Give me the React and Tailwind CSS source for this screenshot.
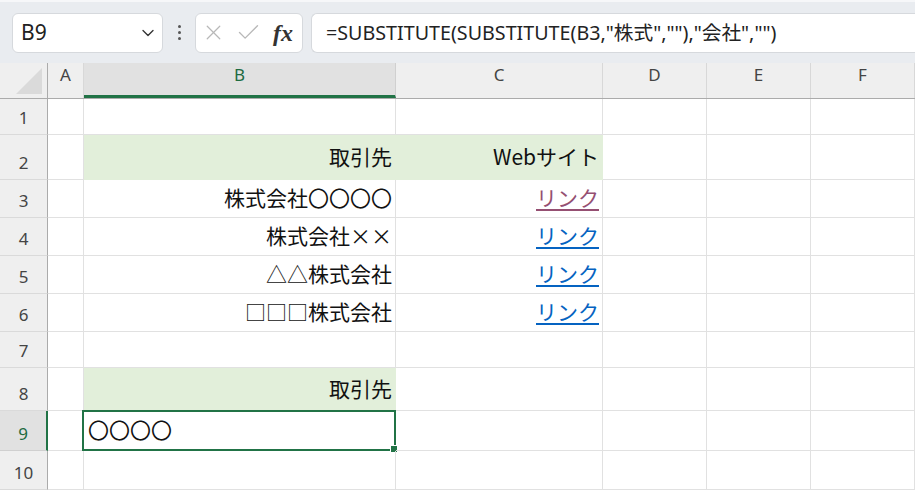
import { ChevronDown, X, Check } from 'lucide-react';

const cols = [
  { key: 'A', w: 'w-[36px]' },
  { key: 'B', w: 'w-[312px]' },
  { key: 'C', w: 'w-[207px]' },
  { key: 'D', w: 'w-[104px]' },
  { key: 'E', w: 'w-[104px]' },
  { key: 'F', w: 'w-[104px]' },
];

const rows = [
  { n: 1, h: 'h-[36px]', cells: {} },
  { n: 2, h: 'h-[45px]', cells: { B: { text: '取引先', fill: true }, C: { text: 'Webサイト', fill: true } } },
  { n: 3, h: 'h-[38px]', cells: { B: { text: '株式会社〇〇〇〇' }, C: { link: 'visited' } } },
  { n: 4, h: 'h-[38px]', cells: { B: { text: '株式会社××' }, C: { link: 'new' } } },
  { n: 5, h: 'h-[38px]', cells: { B: { text: '△△株式会社' }, C: { link: 'new' } } },
  { n: 6, h: 'h-[38px]', cells: { B: { text: '□□□株式会社' }, C: { link: 'new' } } },
  { n: 7, h: 'h-[36px]', cells: {} },
  { n: 8, h: 'h-[43px]', cells: { B: { text: '取引先', fill: true } } },
  { n: 9, h: 'h-[40px]', cells: { B: { text: '〇〇〇〇', left: true, active: true } } },
  { n: 10, h: 'h-[39px]', cells: {} },
];

const cellFont = { fontFamily: '"Noto Sans CJK JP", "Noto Sans", sans-serif' };

function Cell({ col, data }) {
  const base = `${col.w} shrink-0 border-r border-b relative flex items-center`;
  if (!data) return <div className={`${base} border-[#e1e1e1]`} />;
  const fill = data.fill ? 'bg-[#e2efda] border-[#e2efda]' : 'border-[#e1e1e1]';
  return (
    <div className={`${base} ${fill} ${data.left ? 'justify-start pl-[4px]' : 'justify-end pr-[3px]'} pb-[3px]`}>
      {data.text && (
        <span className="text-[21px] leading-[26px] text-[#111]" style={cellFont}>
          {data.text}
        </span>
      )}
      {data.link && (
        <span
          className={`text-[21px] leading-[26px] underline underline-offset-[3px] decoration-[1.5px] ${
            data.link === 'visited' ? 'text-[#954f72]' : 'text-[#0563c1]'
          }`}
          style={cellFont}
        >
          リンク
        </span>
      )}
      {data.active && (
        <div className="absolute -left-[2px] -top-[1px] -right-[1px] -bottom-[1px] border-2 border-[#217346] pointer-events-none">
          <div className="absolute -right-[4px] -bottom-[4px] w-[8px] h-[8px] bg-[#217346] border border-white" />
        </div>
      )}
    </div>
  );
}

export default function App() {
  return (
    <div className="w-[915px] h-[490px] overflow-hidden bg-white" style={{ fontFamily: '"Noto Sans", sans-serif' }}>
      {/* formula bar */}
      <div className="h-[63px] bg-[#e9ecf0] border-t-2 border-[#f6f7f9] flex items-center pl-[12px] gap-[8px]">
        <div className="w-[151px] h-[40px] bg-white rounded-[6px] border border-[#d6d9dd] flex items-center justify-between pl-[8px] pr-[4px]">
          <span className="text-[21px] text-[#222]">B9</span>
          <ChevronDown className="w-[20px] h-[20px] text-[#333]" strokeWidth={1.6} />
        </div>
        <div className="w-[16px] flex flex-col items-center gap-[3px]">
          <span className="w-[3px] h-[3px] rounded-full bg-[#555]" />
          <span className="w-[3px] h-[3px] rounded-full bg-[#555]" />
          <span className="w-[3px] h-[3px] rounded-full bg-[#555]" />
        </div>
        <div className="w-[108px] h-[40px] bg-white rounded-[6px] border border-[#d6d9dd] flex items-center pl-[5px] gap-[9px]">
          <X className="w-[25px] h-[25px] text-[#b8b8b8]" strokeWidth={1.2} />
          <Check className="w-[27px] h-[27px] text-[#b8b8b8]" strokeWidth={1.2} />
          <span
            className="text-[24px] italic font-bold text-[#333] leading-none ml-[2px]"
            style={{ fontFamily: '"Liberation Serif", serif' }}
          >
            fx
          </span>
        </div>
        <div className="flex-1 h-[40px] bg-white rounded-l-[6px] border border-r-0 border-[#d6d9dd] flex items-center pl-[14px]">
          <span className="text-[19.7px] text-[#222] whitespace-nowrap" style={{ fontFamily: '"Noto Sans", "Noto Sans CJK JP", sans-serif' }}>
            =SUBSTITUTE(SUBSTITUTE(B3,"株式",""),"会社","")
          </span>
        </div>
      </div>

      {/* column headers */}
      <div className="flex h-[36px] bg-[#efefef] border-b border-[#ababab]">
        <div className="w-[48px] shrink-0 border-r border-[#ababab] flex items-end justify-end pr-[4px] pb-[3px]">
          <svg width="28" height="28" viewBox="0 0 28 28">
            <polygon points="27,1 27,27 1,27" fill="#dadada" />
          </svg>
        </div>
        {cols.map((c) => (
          <div
            key={c.key}
            className={`${c.w} shrink-0 border-r flex items-start justify-center pt-[2px] text-[17px] leading-[20px] ${
              c.key === 'B'
                ? 'bg-[#e1e1e1] border-[#d0d0d0] text-[#1e6b41] border-b-[3px] border-b-[#217346]'
                : 'border-[#d8d8d8] text-[#444]'
            }`}
          >
            {c.key}
          </div>
        ))}
      </div>

      {/* rows */}
      {rows.map((r) => (
        <div key={r.n} className={`flex ${r.h}`}>
          <div
            className={`w-[48px] shrink-0 border-b flex items-end justify-center pb-[6px] text-[17px] leading-[20px] ${
              r.n === 9
                ? 'bg-[#e1e1e1] border-r-2 border-r-[#217346] border-b-[#d0d0d0] text-[#1e6b41]'
                : 'bg-[#efefef] border-r border-r-[#ababab] border-b-[#dadada] text-[#444]'
            }`}
          >
            {r.n}
          </div>
          {cols.map((c) => (
            <Cell key={c.key} col={c} data={r.cells[c.key]} />
          ))}
        </div>
      ))}
    </div>
  );
}
